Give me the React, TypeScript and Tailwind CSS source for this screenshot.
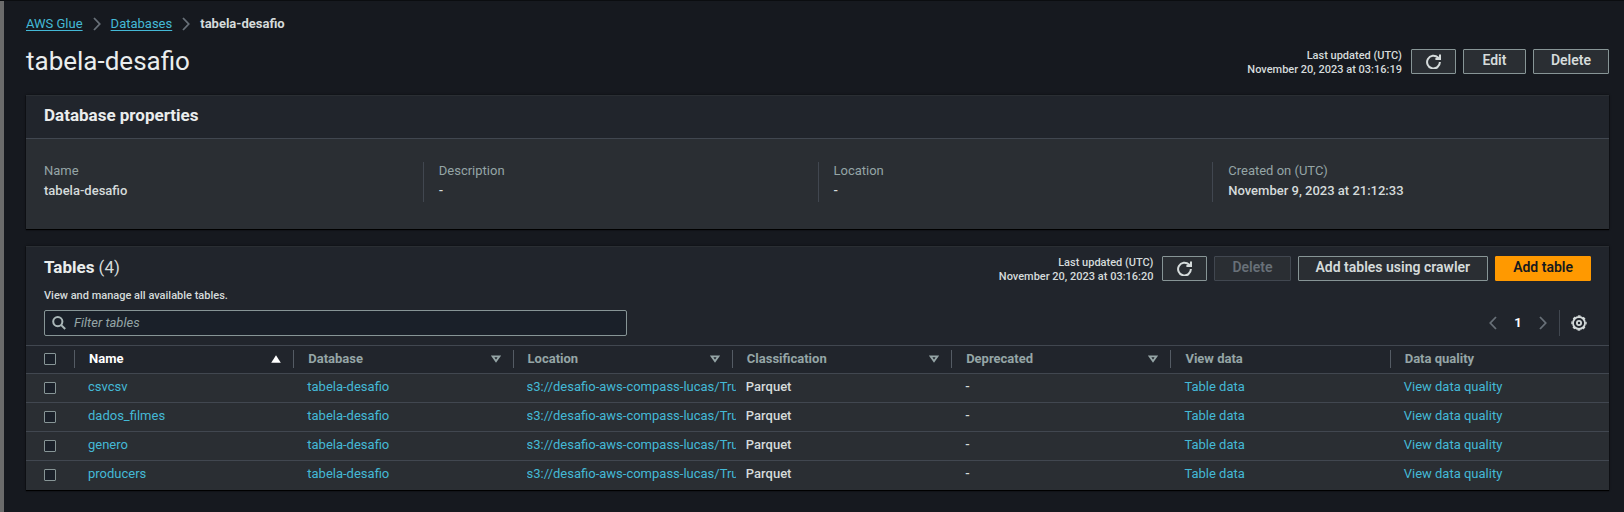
import React from "react";

type Sort = "asc" | "none" | null;

const columns: { label: string; sort: Sort }[] = [
  { label: "Name", sort: "asc" },
  { label: "Database", sort: "none" },
  { label: "Location", sort: "none" },
  { label: "Classification", sort: "none" },
  { label: "Deprecated", sort: "none" },
  { label: "View data", sort: null },
  { label: "Data quality", sort: null },
];

const tables = ["csvcsv", "dados_filmes", "genero", "producers"];

const properties = [
  { label: "Name", value: "tabela-desafio" },
  { label: "Description", value: "-" },
  { label: "Location", value: "-" },
  { label: "Created on (UTC)", value: "November 9, 2023 at 21:12:33" },
];

function Chevron({ left = false }: { left?: boolean }) {
  return (
    <svg width="8" height="14" viewBox="0 0 8 14" fill="none" stroke="#687078" strokeWidth="1.8" aria-hidden="true">
      <path d={left ? "M7 1 L1.3 7 L7 13" : "M1 1 L6.7 7 L1 13"} />
    </svg>
  );
}

function RefreshIcon() {
  return (
    <svg width="15" height="15" viewBox="0 0 15 15" fill="none" stroke="#d5dbdb" strokeWidth="2" aria-hidden="true">
      <path d="M13.9 8 A6.4 6.4 0 1 1 12 3.5 L12.8 4.3" />
      <path d="M9.4 5 H14 V0.6" />
    </svg>
  );
}

function SearchIcon() {
  return (
    <svg width="14" height="14" viewBox="0 0 14 14" fill="none" stroke="#aab7b8" strokeWidth="2" aria-hidden="true">
      <circle cx="5.8" cy="5.6" r="4.6" />
      <path d="M9 8.9 L13.2 13" />
    </svg>
  );
}

function GearIcon() {
  return (
    <svg width="16" height="16" viewBox="0 0 16 16" fill="none" stroke="#d5dbdb" aria-hidden="true">
      <circle cx="8" cy="8" r="6" strokeWidth="1.8" />
      <circle cx="8" cy="8" r="7.1" strokeWidth="1.2" strokeDasharray="2.79 2.79" strokeDashoffset="1.4" />
      <circle cx="8" cy="8" r="2.1" strokeWidth="1.8" />
    </svg>
  );
}

function SortIcon({ sort }: { sort: Sort }) {
  if (sort === "asc") {
    return (
      <svg width="10" height="8" viewBox="0 0 10 8" aria-hidden="true">
        <path d="M5 0.3 L9.8 7.7 H0.2 Z" fill="#ffffff" />
      </svg>
    );
  }
  return (
    <svg width="10" height="8" viewBox="0 0 10 8" fill="none" stroke="#95a5a6" strokeWidth="1.9" aria-hidden="true">
      <path d="M1.6 1.4 H8.4 L5 6.2 Z" />
    </svg>
  );
}

function Button({
  children,
  variant = "normal",
  label,
}: {
  children: React.ReactNode;
  variant?: "normal" | "icon" | "primary" | "disabled";
  label?: string;
}) {
  const styles = {
    normal: "min-w-[63px] border-[#879596] bg-[#2a2e33] px-[17px] text-[#d5dbdb]",
    icon: "border-[#879596] bg-[#2a2e33] px-3.5 text-[#d5dbdb]",
    primary: "border-[#ff9900] bg-[#ff9900] px-[17px] text-[#16191f]",
    disabled: "border-[#414750] bg-[#2a2e33] px-[17px] text-[#687078]",
  };
  return (
    <button
      type="button"
      aria-label={label}
      disabled={variant === "disabled"}
      className={`flex h-[25px] items-center justify-center rounded-[1px] border text-sm leading-5 font-semibold whitespace-nowrap ${
        variant === "icon" ? "" : "pb-0.5"
      } ${styles[variant]}`}
    >
      {children}
    </button>
  );
}

function LastUpdated({ time }: { time: string }) {
  return (
    <p className="mr-0.5 pt-1 text-right text-[11px] leading-3.5">
      Last updated (UTC)
      <br />
      {time}
    </p>
  );
}

function Checkbox({ label }: { label: string }) {
  return (
    <input
      type="checkbox"
      aria-label={label}
      className="block size-3 appearance-none rounded-[1px] border border-[#879596] bg-[#1a2029]"
    />
  );
}

const linkClass = "font-normal text-[#44b9d6] hover:underline";
const panelClass = "border-t border-[#2a2e33] bg-[#21252c] shadow-[0_1px_1px_0_#000000,0_0_2px_0_rgba(0,0,0,0.6)]";

export default function App() {
  return (
    <div className="min-h-screen border-t border-[#0b0d10] bg-[#16191f] font-['Roboto','Noto_Sans',sans-serif] text-[13px] leading-5 font-medium text-[#d5dbdb]">
      <main className="min-h-[511px] border-l-4 border-[#6b6b6b] pt-[13px] pr-[15px] pb-5 pl-[22px]">
        <nav aria-label="Breadcrumb">
          <ol className="flex items-center gap-2.5">
            <li>
              <a href="#glue" className="font-normal text-[#44b9d6] underline underline-offset-2">AWS Glue</a>
            </li>
            <li className="flex items-center gap-2.5">
              <Chevron />
              <a href="#databases" className="font-normal text-[#44b9d6] underline underline-offset-2">Databases</a>
            </li>
            <li className="flex items-center gap-2.5 font-bold">
              <Chevron />
              tabela-desafio
            </li>
          </ol>
        </nav>

        <header className="mt-2.5 flex items-center justify-between pb-[17px]">
          <h1 className="text-[26px] leading-[34px] font-normal text-[#eaeded]">tabela-desafio</h1>
          <div className="flex items-center gap-[7px]">
            <LastUpdated time="November 20, 2023 at 03:16:19" />
            <Button variant="icon" label="Refresh database">
              <RefreshIcon />
            </Button>
            <Button>Edit</Button>
            <Button>Delete</Button>
          </div>
        </header>

        <section className={panelClass}>
          <h2 className="border-b border-[#414750] px-[18px] pt-[7px] pb-[11px] text-[17px] leading-6 font-bold text-[#eaeded]">
            Database properties
          </h2>
          <dl className="grid grid-cols-4 bg-[#2a2e33] px-0.5 pt-[23px] pb-[27px]">
            {properties.map((p) => (
              <div key={p.label} className="h-10 border-l border-[#414750] pl-[15px] first:border-transparent">
                <dt className="leading-[18px] font-normal text-[#95a5a6]">{p.label}</dt>
                <dd className="leading-[22px]">{p.value}</dd>
              </div>
            ))}
          </dl>
        </section>

        <section className={`mt-[17px] ${panelClass}`}>
          <div className="flex items-start justify-between px-[18px] pt-[5px]">
            <div className="pt-[3px]">
              <h2 className="text-[17px] leading-6 font-bold text-[#eaeded]">
                Tables <span className="font-normal text-[#d5dbdb]">(4)</span>
              </h2>
              <p className="mt-[7px] text-[11px] leading-5">View and manage all available tables.</p>
            </div>
            <div className="flex items-center gap-[7px]">
              <LastUpdated time="November 20, 2023 at 03:16:20" />
              <Button variant="icon" label="Refresh tables">
                <RefreshIcon />
              </Button>
              <Button variant="disabled">Delete</Button>
              <Button>Add tables using crawler</Button>
              <Button variant="primary">Add table</Button>
            </div>
          </div>

          <div className="flex items-center justify-between px-[18px] pt-1 pb-[9px]">
            <label className="flex h-[26px] w-[583px] items-center gap-2 rounded-xs border border-[#879596] bg-[#1a2029] px-[7px]">
              <SearchIcon />
              <input
                type="search"
                aria-label="Filter tables"
                placeholder="Filter tables"
                className="min-w-0 flex-1 bg-transparent text-[13px] font-normal italic outline-none placeholder:text-[#95a5a6]"
              />
            </label>
            <div className="flex h-[26px] items-center pr-1">
              <button type="button" aria-label="Previous page">
                <Chevron left />
              </button>
              <button type="button" className="w-[42px] text-center font-bold text-white">
                1
              </button>
              <button type="button" aria-label="Next page">
                <Chevron />
              </button>
              <span className="ml-3 h-full border-l border-[#414750]" />
              <button type="button" aria-label="Preferences" className="ml-[11px]">
                <GearIcon />
              </button>
            </div>
          </div>

          <table className="w-full table-fixed border-collapse">
            <thead>
              <tr className="h-7 border-y border-[#414750]">
                <th className="w-12 pb-0.5 pl-[18px]">
                  <Checkbox label="Select all tables" />
                </th>
                {columns.map((c) => (
                  <th key={c.label} scope="col" className="p-0 pb-0.5 text-left">
                    <div
                      className={`flex h-[18px] items-center justify-between border-l border-[#545b64] pr-3 pl-3.5 font-bold ${
                        c.sort === "asc" ? "text-white" : "text-[#95a5a6]"
                      }`}
                    >
                      {c.label}
                      {c.sort && <SortIcon sort={c.sort} />}
                    </div>
                  </th>
                ))}
              </tr>
            </thead>
            <tbody className="bg-[#2a2e33]">
              {tables.map((name) => (
                <tr key={name} className="h-[29px] border-t border-[#414750]">
                  <td className="pl-[18px]">
                    <Checkbox label={`Select ${name}`} />
                  </td>
                  <td className="pb-0.5 pl-3.5">
                    <a href="#table" className={linkClass}>{name}</a>
                  </td>
                  <td className="pb-0.5 pl-3.5">
                    <a href="#database" className={linkClass}>tabela-desafio</a>
                  </td>
                  <td className="pb-0.5 pl-3.5">
                    <div className="-mr-1 overflow-hidden whitespace-nowrap">
                      <a href="#location" className={linkClass}>s3://desafio-aws-compass-lucas/Tru</a>
                    </div>
                  </td>
                  <td className="pb-0.5 pl-3.5">Parquet</td>
                  <td className="pb-0.5 pl-3.5">-</td>
                  <td className="pb-0.5 pl-3.5">
                    <a href="#data" className={linkClass}>Table data</a>
                  </td>
                  <td className="pb-0.5 pl-3.5">
                    <a href="#quality" className={linkClass}>View data quality</a>
                  </td>
                </tr>
              ))}
            </tbody>
          </table>
        </section>
      </main>
    </div>
  );
}
